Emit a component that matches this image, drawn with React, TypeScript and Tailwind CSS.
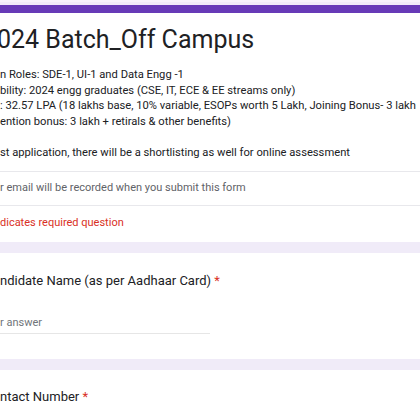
import React from 'react';

const descLines = [
    "n Roles: SDE-1, UI-1 and Data Engg -1",
    "bility: 2024 engg graduates (CSE, IT, ECE & EE streams only)",
    ": 32.57 LPA (18 lakhs base, 10% variable, ESOPs worth 5 Lakh, Joining Bonus- 3 lakh",
    "ention bonus: 3 lakh + retirals & other benefits)",
    "",
    "st application, there will be a shortlisting as well for online assessment",
];

export default function App() {
    return (
        <div className="w-[420px] h-[420px] overflow-hidden bg-[#f0ebf8] font-['Roboto',sans-serif] text-[#202124]">
            <div className="h-[5px] border-t-[2px] border-[#f6f3fb]"></div>
            <div className="bg-white">
                <div className="h-[8px] bg-[#673ab7]"></div>
                <div className="pt-[11px] pb-[10px] border-b border-[#e8e8ec]">
                    <h1 className="text-[25px] leading-[32px] whitespace-nowrap -ml-[3px]">024 Batch_Off Campus</h1>
                    <div className="mt-[11px] text-[11.2px] leading-[15.6px] whitespace-nowrap">
                        {descLines.map((line, index) => (
                            <div key={index} className="h-[15.6px]">{line}</div>
                        ))}
                    </div>
                </div>
                <div className="h-[34px] flex items-center border-b border-[#e8e8ec] text-[11px] text-[#5f6368] whitespace-nowrap">
                    r email will be recorded when you submit this form
                </div>
                <div className="pt-[9px] pb-[11px] text-[11px] leading-[16px] text-[#d93025] whitespace-nowrap">
                    dicates required question
                </div>
            </div>
            <div className="mt-[11px] bg-white h-[106px] pt-[18px]">
                <div className="text-[13px] leading-[20px] whitespace-nowrap">
                    ndidate Name (as per Aadhaar Card) <span className="text-[#d93025]">*</span>
                </div>
                <div className="mt-[24px] w-[210px] border-b border-[#e6e6e6] pb-[2px] text-[11px] leading-[16px] text-[#70757a]">
                    r answer
                </div>
            </div>
            <div className="mt-[11px] bg-white h-[60px] pt-[17px]">
                <div className="text-[13px] leading-[20px] whitespace-nowrap">
                    ntact Number <span className="text-[#d93025]">*</span>
                </div>
            </div>
        </div>
    );
}
